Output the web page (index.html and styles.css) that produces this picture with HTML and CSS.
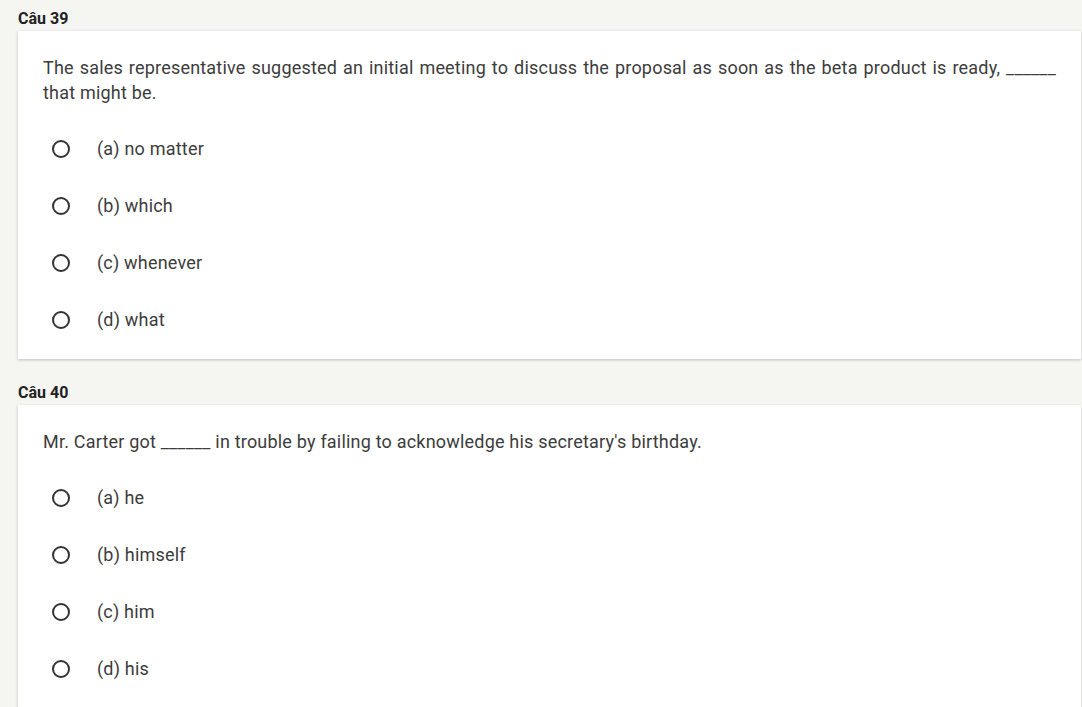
FILE: index.html
```html
<!DOCTYPE html>
<html lang="vi">
<head>
<meta charset="utf-8">
<title>Quiz</title>
<link rel="stylesheet" href="styles.css">
</head>
<body>
<div class="page">
  <section class="question">
    <div class="q-label">Câu 39</div>
    <div class="card">
      <p class="q-text">The sales representative suggested an initial meeting to discuss the proposal as soon as the beta product is ready, ______ that might be.</p>
      <ul class="options">
        <li class="option"><span class="radio"></span><span class="opt-text">(a) no matter</span></li>
        <li class="option"><span class="radio"></span><span class="opt-text">(b) which</span></li>
        <li class="option"><span class="radio"></span><span class="opt-text">(c) whenever</span></li>
        <li class="option"><span class="radio"></span><span class="opt-text">(d) what</span></li>
      </ul>
    </div>
  </section>
  <section class="question">
    <div class="q-label">Câu 40</div>
    <div class="card">
      <p class="q-text">Mr. Carter got ______ in trouble by failing to acknowledge his secretary's birthday.</p>
      <ul class="options">
        <li class="option"><span class="radio"></span><span class="opt-text">(a) he</span></li>
        <li class="option"><span class="radio"></span><span class="opt-text">(b) himself</span></li>
        <li class="option"><span class="radio"></span><span class="opt-text">(c) him</span></li>
        <li class="option"><span class="radio"></span><span class="opt-text">(d) his</span></li>
      </ul>
    </div>
  </section>
</div>
</body>
</html>
```

FILE: styles.css
```css
html, body {
  margin: 0;
  padding: 0;
  background: #f5f5f2;
  font-family: Roboto, "Noto Sans", sans-serif;
  color: #333;
}
.page {
  padding: 10px 1px 0 18px;
  display: flex;
  flex-direction: column;
  gap: 25px;
}
.q-label {
  font-size: 16px;
  font-weight: 700;
  color: #222;
  line-height: 18px;
  margin-bottom: 3px;
}
.card {
  background: #fff;
  box-shadow: 0 1px 3px rgba(0,0,0,0.22);
  padding: 24px 25px 11px 25px;
}
.q-text {
  margin: 0 0 15px 0;
  font-size: 18px;
  line-height: 25px;
  letter-spacing: 0.2px;
  text-align: justify;
  color: #3c3c3c;
}
.options {
  list-style: none;
  margin: 0;
  padding: 0;
}
.option {
  height: 57px;
  display: flex;
  align-items: center;
}
.radio {
  width: 14px;
  height: 14px;
  border: 2px solid #333;
  border-radius: 50%;
  margin-left: 9px;
  margin-right: 27px;
  flex: none;
}
.opt-text {
  font-size: 18px;
  letter-spacing: 0.2px;
  color: #3c3c3c;
}
```
